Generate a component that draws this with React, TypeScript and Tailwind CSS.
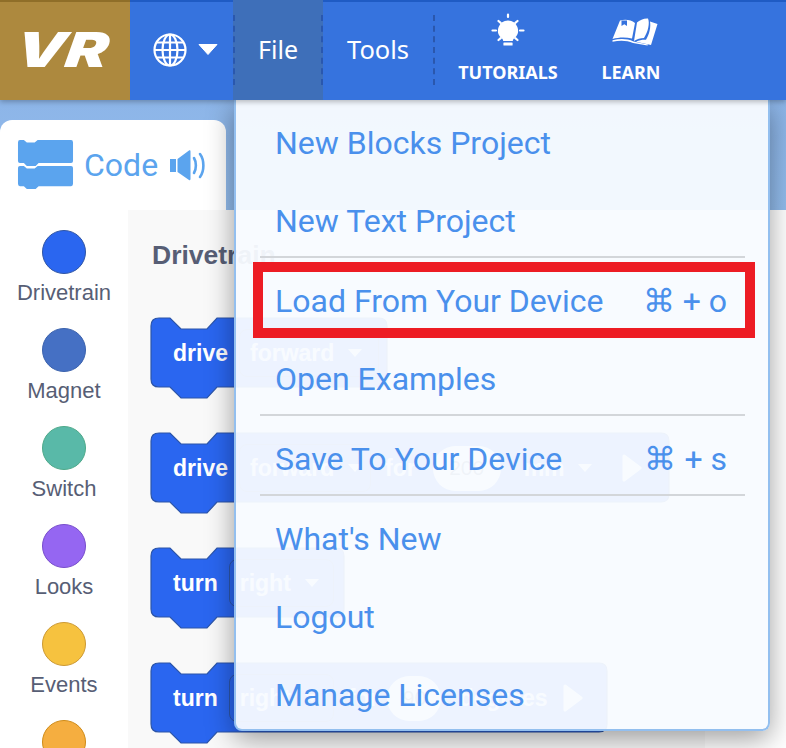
import React from "react";

function Block({ width, children }: { width: number; children: React.ReactNode }) {
  const w = width;
  const d = `M1 9 Q1 1 9 1 H20 L31 12 H57 L67 1 H${w - 9} Q${w - 1} 1 ${w - 1} 9 V62 Q${w - 1} 70 ${w - 9} 70 H67 L57 81 H31 L20 70 H9 Q1 70 1 62 Z`;
  return (
    <div className="relative h-[82px] flex items-center pl-[23px] pb-[10px]" style={{ width }}>
      <svg className="absolute inset-0" width={w} height={82} viewBox={`0 0 ${w} 82`}>
        <path d={d} fill="#2a66f0" stroke="#2c55a8" strokeWidth="1.2" />
      </svg>
      {children}
    </div>
  );
}

function T({ children, ml = 0 }: { children: React.ReactNode; ml?: number }) {
  return (
    <span className="relative text-white font-bold text-[23px] leading-none font-['Liberation_Sans',sans-serif]" style={{ marginLeft: ml }}>
      {children}
    </span>
  );
}

function Caret({ ml = 0 }: { ml?: number }) {
  return (
    <svg width="14" height="8" viewBox="0 0 14 8" className="relative shrink-0" style={{ marginLeft: ml }}>
      <path d="M0 0H14L7 8Z" fill="#fff" />
    </svg>
  );
}

function Drop({ label, w }: { label: string; w: number }) {
  return (
    <span className="relative shrink-0 ml-[11px] flex items-center gap-[14px] h-[48px] pl-[10px] rounded-lg border border-[#2c55a8]" style={{ width: w }}>
      <T>{label}</T>
      <Caret />
    </span>
  );
}

function Pill({ label, w, ml }: { label: string; w: number; ml: number }) {
  return (
    <span
      className="relative shrink-0 flex items-center justify-center h-[45px] rounded-full bg-white text-[#575e75] text-[21px] font-['Liberation_Sans',sans-serif]"
      style={{ width: w, marginLeft: ml }}
    >
      {label}
    </span>
  );
}

function Play({ ml }: { ml: number }) {
  return (
    <svg width="20" height="30" viewBox="0 0 20 30" className="relative shrink-0" style={{ marginLeft: ml }}>
      <path d="M2 3 L18 15 L2 27Z" fill="#fff" stroke="#fff" strokeWidth="3" strokeLinejoin="round" />
    </svg>
  );
}

function Category({ label, fill, edge }: { label?: string; fill: string; edge: string }) {
  return (
    <div className="flex flex-col items-center h-[98px] shrink-0">
      <div className="w-[44px] h-[44px] rounded-full border-[1.5px]" style={{ backgroundColor: fill, borderColor: edge }} />
      {label && <span className="mt-[4px] text-[22px] leading-[30px] text-[#575e75] font-['Liberation_Sans',sans-serif]">{label}</span>}
    </div>
  );
}

function MenuItem({ label, keys }: { label: string; keys?: string }) {
  return (
    <div className="h-[78px] pl-[40px] pr-[41px] flex items-center justify-between text-[32px] text-[#4a90ec] font-['Roboto',sans-serif]">
      <span className="-ml-px">{label}</span>
      {keys && <span>{keys}</span>}
    </div>
  );
}

function Rule() {
  return <div className="-mt-1 mb-1 ml-[24px] mr-[23px] h-0.5 bg-[#d3d6da] relative" />;
}

function Sep() {
  return <div className="h-[70px] border-l-2 border-dashed border-[#2a57ad] shrink-0" />;
}

function Globe() {
  return (
    <svg width="34" height="34" viewBox="0 0 34 34" fill="none" stroke="#fff" strokeWidth="2.2">
      <circle cx="17" cy="17" r="15.5" />
      <ellipse cx="17" cy="17" rx="7.5" ry="15.5" />
      <path d="M17 1.5V32.5M1.5 17H32.500M3.800 9.500H30.200M3.800 24.500H30.200" />
    </svg>
  );
}

function Bulb() {
  return (
    <svg width="36" height="36" viewBox="0 0 36 36" fill="#fff">
      <path d="M18 7.500a10 10 0 0 0-6.500 17.600c1.200 1.100 1.600 1.800 1.700 2.900h9.600c.1-1.100.5-1.800 1.700-2.900A10 10 0 0 0 18 7.500Z" />
      <rect x="13.400" y="29.500" width="9.200" height="3" rx=".6" />
      <path d="M18 1.500v2.500M6 17.500H2.500M33.500 17.500H30M8.500 8l2.200 1.800M27.500 8l-2.200 1.800M8.500 27l2.200-1.800M27.500 27l-2.200-1.800" stroke="#fff" strokeWidth="2.200" strokeLinecap="round" />
    </svg>
  );
}

function Book() {
  return (
    <svg width="46" height="28" viewBox="0 0 46 28" fill="#fff">
      <path d="M8 2.500 C14 1 19 2 23 5 L20 20.500 C14 19 7 19 0.500 21 Z" />
      <path d="M9.500 2.500H15V8L12.300 6.300L9.500 8Z" fill="#3673de" />
      <path d="M25 4.500 C27.500 2 32 .2 36 .5 C38 5 36 14 32 20 C28.500 20 25 21 22 23 Z" />
      <path d="M38 3.500 L45.500 6 L39 27 L24 23.800 C28 21.800 31 21.600 34 21.800 C37.500 16 39 9 38 3.500 Z" />
      <path d="M.5 22.300 C8 20.500 15 20.500 21.500 23.500 L36 26.500 L35.500 27.500 L21 25 C15 22.500 8 22.300 .5 23.800 Z" />
    </svg>
  );
}

function CodeIcon() {
  return (
    <svg width="57" height="52" viewBox="0 0 58 52" fill="#5ba4ee">
      <path d="M1 3 Q1 .5 3 .5 H7 L10 3 H18 L21 .5 H55 Q57 .5 57 3 V22 Q57 24 55 24 H22 L19 27 H10 L7 24 H3 Q1 24 1 22 Z" />
      <path d="M1 29 Q1 27 3 27 H7 L10 29.500 H18 L21 27 H55 Q57 27 57 29 V45 Q57 47.500 55 47.500 H22 L19 50.500 H10 L7 47.500 H3 Q1 47.500 1 45 Z" />
    </svg>
  );
}

function Speaker() {
  return (
    <svg width="38" height="32" viewBox="0 0 38 32" fill="none">
      <path d="M1 10H7V23H1ZM8.500 10L20 1.500C21 1 21.500 1.500 21.500 2.500V30C21.500 31 21 31.500 20 31L8.500 23Z" fill="#5ba4ee" />
      <path d="M25 9C27.500 13 27.500 20 25 24M31 5C35.500 11 35.500 22 31 28" stroke="#5ba4ee" strokeWidth="2.600" strokeLinecap="round" />
    </svg>
  );
}

export default function App() {
  return (
    <div className="relative w-[786px] h-[748px] overflow-hidden flex flex-col bg-white font-['Liberation_Sans',sans-serif]">
      <header className="relative z-30 h-[100px] shrink-0 flex bg-[#3673de] border-t-2 border-[#1f5bc4] shadow-[0_2px_5px_rgba(0,0,0,0.25)]">
        <div className="-mt-0.5 w-[130px] shrink-0 bg-[#ad893e] border-t-2 border-[#8f6e28] flex items-center justify-center pb-[3px] pr-[5px] overflow-hidden">
          <span className="text-white font-black italic text-[48px] leading-none font-['Inter',sans-serif] scale-x-[1.32] skew-x-[-6deg]">VR</span>
        </div>
        <div className="w-[103px] shrink-0 flex items-center pl-[23px] pb-[3px] gap-[11px]">
          <Globe />
          <svg width="20" height="11" viewBox="0 0 20 11"><path d="M1 0.500H19L10 10.500Z" fill="#fff" stroke="#fff" strokeLinejoin="round" /></svg>
        </div>
        <div className="w-[90px] shrink-0 bg-[#3e6fb9] flex items-center justify-between -mt-0.5">
          <Sep />
          <span className="text-white text-[25px] font-['Noto_Sans',sans-serif]">File</span>
          <Sep />
        </div>
        <div className="w-[112px] shrink-0 flex items-center justify-between pl-[24px] pb-[3px]">
          <span className="text-white text-[25.5px] font-['Noto_Sans',sans-serif]">Tools</span>
          <Sep />
        </div>
        <div className="w-[146px] shrink-0 flex flex-col items-center pt-[11px]">
          <Bulb />
          <span className="mt-[11px] text-white font-bold text-[18px] leading-[24px] font-['Noto_Sans',sans-serif]">TUTORIALS</span>
        </div>
        <div className="w-[100px] shrink-0 flex flex-col items-center pt-[16px] -ml-[1px]">
          <span className="ml-[9px] leading-[0]"><Book /></span>
          <span className="mt-[14px] ml-[2px] text-white font-bold text-[18px] leading-[24px] font-['Noto_Sans',sans-serif]">LEARN</span>
        </div>
      </header>

      <div className="h-[110px] shrink-0 bg-gradient-to-b from-[#8db5e8] to-[#92bcec] pt-5">
        <div className="w-[226px] h-[90px] bg-white rounded-t-xl flex items-center pl-[17px]">
          <CodeIcon />
          <span className="ml-[10px] text-[#5ba4ee] text-[32px] font-['Roboto',sans-serif]">Code</span>
          <span className="ml-[11px]"><Speaker /></span>
        </div>
      </div>

      <div className="flex-1 flex min-h-0">
        <aside className="w-[128px] shrink-0 bg-white flex flex-col pt-[20px] overflow-hidden">
          <Category label="Drivetrain" fill="#2a66f0" edge="#2f55a5" />
          <Category label="Magnet" fill="#4570c4" edge="#3b62ad" />
          <Category label="Switch" fill="#59b9a8" edge="#4ea98a" />
          <Category label="Looks" fill="#9566f2" edge="#774dcb" />
          <Category label="Events" fill="#f6c23f" edge="#cc9933" />
          <Category fill="#f5ae40" edge="#cf8b17" />
        </aside>
        <main className="w-[577px] shrink-0 bg-[#f9f9f9] overflow-hidden pl-[24px] pt-[31px]">
          <h2 className="text-[#575e75] font-bold text-[26.5px] leading-[28px] font-['Liberation_Sans',sans-serif]">Drivetrain</h2>
          <div className="-ml-0.5 mt-[48px] flex flex-col gap-[33px]">
            <Block width={238}><T>drive</T><Drop label="forward" w={140} /></Block>
            <Block width={520}>
              <T>drive</T><Drop label="forward" w={132} />
              <T ml={14}>for</T>
              <Pill label="200" w={68} ml={17} />
              <T ml={23}>mm</T>
              <Caret ml={13} />
              <Play ml={30} />
            </Block>
            <Block width={195}><T>turn</T><Drop label="right" w={105} /></Block>
            <Block width={458}>
              <T>turn</T><Drop label="right" w={105} />
              <T ml={14}>for</T>
              <Pill label="90" w={54} ml={9} />
              <T ml={18}>degrees</T>
              <Play ml={15} />
            </Block>
          </div>
        </main>
        <div className="flex-1 bg-white" />
      </div>

      <nav className="absolute z-20 left-[234px] top-[100px] w-[536px] h-[631px] pt-1 bg-[#f8fbff]/95 border-2 border-t-0 border-[#93bfef] rounded-b-lg shadow-[0_8px_28px_rgba(0,0,0,0.38)]">
        <MenuItem label="New Blocks Project" />
        <MenuItem label="New Text Project" />
        <Rule />
        <MenuItem label="Load From Your Device" keys="⌘ + o" />
        <MenuItem label="Open Examples" />
        <Rule />
        <MenuItem label="Save To Your Device" keys="⌘ + s" />
        <Rule />
        <MenuItem label="What's New" />
        <MenuItem label="Logout" />
        <MenuItem label="Manage Licenses" />
      </nav>
      <div className="absolute z-40 left-[253px] top-[262px] w-[502px] h-[76px] border-[10px] border-[#ed1c24]" />
    </div>
  );
}
